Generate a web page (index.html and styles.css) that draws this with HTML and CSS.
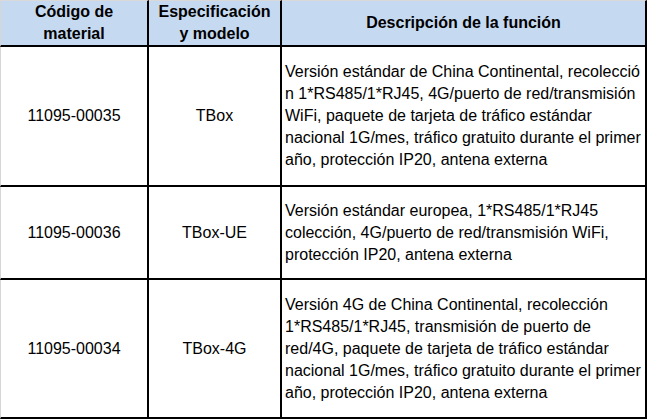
FILE: index.html
```html
<!DOCTYPE html>
<html lang="es">
<head>
<meta charset="utf-8">
<title>Tabla de materiales</title>
<link rel="stylesheet" href="styles.css">
</head>
<body>
<div class="sheet">
  <div class="cell head first top">Código de<br>material</div>
  <div class="cell head top">Especificación<br>y modelo</div>
  <div class="cell head top">Descripción de la función</div>

  <div class="cell first r1">11095-00035</div>
  <div class="cell r1">TBox</div>
  <div class="cell desc r1">Versión estándar de China Continental, recolecció<br>n 1*RS485/1*RJ45, 4G/puerto de red/transmisión<br>WiFi, paquete de tarjeta de tráfico estándar<br>nacional 1G/mes, tráfico gratuito durante el primer<br>año, protección IP20, antena externa</div>

  <div class="cell first r2">11095-00036</div>
  <div class="cell r2">TBox-UE</div>
  <div class="cell desc r2">Versión estándar europea, 1*RS485/1*RJ45<br>colección, 4G/puerto de red/transmisión WiFi,<br>protección IP20, antena externa</div>

  <div class="cell first r3">11095-00034</div>
  <div class="cell r3">TBox-4G</div>
  <div class="cell desc r3">Versión 4G de China Continental, recolección<br>1*RS485/1*RJ45, transmisión de puerto de<br>red/4G, paquete de tarjeta de tráfico estándar<br>nacional 1G/mes, tráfico gratuito durante el primer<br>año, protección IP20, antena externa</div>
</div>
</body>
</html>
```
FILE: styles.css
```css
* { box-sizing: border-box; }
html, body { margin: 0; padding: 0; background: #ffffff; }
body {
  font-family: "Liberation Sans", Arial, sans-serif;
  font-size: 16px;
  line-height: 22px;
  color: #000000;
}
.sheet {
  display: grid;
  grid-template-columns: 149px 133px 365px;
  grid-template-rows: 47px 140px 93px 139px;
  width: 647px;
  height: 419px;
}
.cell {
  display: flex;
  align-items: center;
  justify-content: center;
  text-align: center;
  border-right: 2px solid #000000;
  border-bottom: 2px solid #000000;
  white-space: nowrap;
  overflow: hidden;
}
.first { border-left: 1px solid #d6d6d6; }
.top { border-top: 1px solid #d9d9d9; }
.head {
  background: #c5d9f1;
  font-weight: bold;
}
.desc {
  justify-content: flex-start;
  text-align: left;
  padding-left: 3px;
}
```
